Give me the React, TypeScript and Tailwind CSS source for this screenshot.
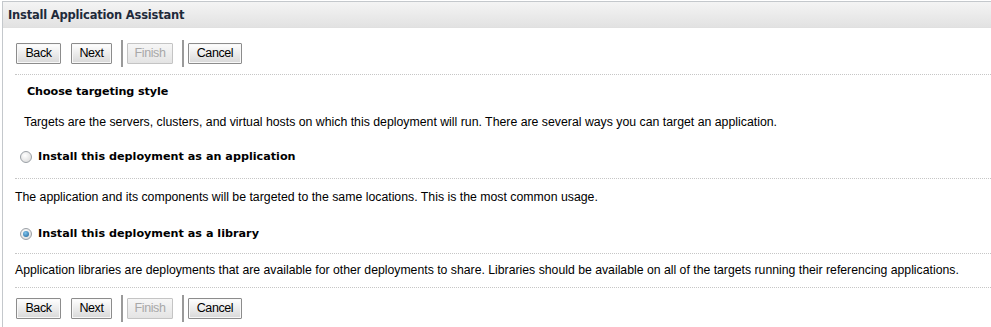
import React from 'react'

const sans = "font-['Liberation_Sans',Arial,sans-serif]"
const bold = "font-['DejaVu_Sans','Liberation_Sans',sans-serif] font-bold"

function Btn({ label, w, disabled }: { label: string; w: string; disabled?: boolean }) {
  return (
    <button
      className={`${w} h-[21px] text-[12.5px] leading-none ${sans} tracking-[-0.4px] border rounded-[1px] ${
        disabled
          ? 'border-[#c4c4c4] text-[#a8a8a8] bg-[linear-gradient(#f6f6f6,#e4e4e4)]'
          : 'border-[#8c8c8c] text-black bg-[linear-gradient(#ffffff,#e8e8e8_60%,#d8d8d8)] shadow-[inset_0_0_0_1px_#f8f8f8]'
      }`}
    >
      {label}
    </button>
  )
}

function Sep() {
  return <div className="w-[2px] h-[27px] bg-[#9a9a9a]" />
}

function ButtonBar() {
  return (
    <div className="flex items-center pl-[13px]">
      <Btn label="Back" w="w-[45px]" />
      <div className="w-[10px]" />
      <Btn label="Next" w="w-[41px]" />
      <div className="w-[9px]" />
      <Sep />
      <div className="w-[4px]" />
      <Btn label="Finish" w="w-[46px]" disabled />
      <div className="w-[9px]" />
      <Sep />
      <div className="w-[4px]" />
      <Btn label="Cancel" w="w-[54px]" />
    </div>
  )
}

function Radio({ checked }: { checked?: boolean }) {
  return (
    <span className="w-[12px] h-[12px] rounded-full border border-[#9aa0a6] bg-[radial-gradient(circle_at_40%_35%,#ffffff,#d6d6d6)] flex items-center justify-center">
      {checked && (
        <span className="w-[6px] h-[6px] rounded-full bg-[radial-gradient(circle_at_40%_35%,#7fc4ee,#1a5f94)]" />
      )}
    </span>
  )
}

function Dotted() {
  return <div className="border-t border-dotted border-[#c6c6c6] ml-[12px]" />
}

export default function App() {
  return (
    <div className="w-[991px] h-[327px] bg-white text-black overflow-hidden pl-[2px] pt-[1px]">
      <div className="h-full border-l border-t border-[#c4c8cc]">
        {/* Header */}
        <div className="h-[26px] flex items-center pl-[5px] pt-[2px] bg-[linear-gradient(#f4f4f4,#ebebeb_50%,#e2e2e2)] border-b border-[#e0e0e0]">
          <span className={`${bold} text-[11.5px] text-[#1e2a3a] tracking-[-0.2px]`}>Install Application Assistant</span>
        </div>

        <div className="pt-[12px]">
          <ButtonBar />
        </div>

        <div className="mt-[7px]">
          <Dotted />
        </div>

        <div className={`${bold} text-[11.2px] pl-[24px] pt-[9px] leading-[16px] tracking-[-0.1px]`}>Choose targeting style</div>

        <div className={`${sans} text-[12.3px] pl-[21px] pt-[15px] leading-[14px]`}>
          Targets are the servers, clusters, and virtual hosts on which this deployment will run. There are several ways you can target an application.
        </div>

        <div className="flex items-center gap-[6px] pl-[17px] pt-[20px]">
          <Radio />
          <span className={`${bold} text-[11.2px] leading-[16px]`}>Install this deployment as an application</span>
        </div>

        <div className="mt-[13px]">
          <Dotted />
        </div>

        <div className={`${sans} text-[12.3px] pl-[12px] pt-[11px] leading-[14px]`}>
          The application and its components will be targeted to the same locations. This is the most common usage.
        </div>

        <div className="flex items-center gap-[6px] pl-[17px] pt-[22px]">
          <Radio checked />
          <span className={`${bold} text-[11.2px] leading-[16px]`}>Install this deployment as a library</span>
        </div>

        <div className="mt-[11px]">
          <Dotted />
        </div>

        <div className={`${sans} text-[12.25px] pl-[12px] pt-[9px] leading-[14px]`}>
          Application libraries are deployments that are available for other deployments to share. Libraries should be available on all of the targets running their referencing applications.
        </div>

        <div className="mt-[10px]">
          <Dotted />
        </div>

        <div className="pt-[7px]">
          <ButtonBar />
        </div>
      </div>
    </div>
  )
}
